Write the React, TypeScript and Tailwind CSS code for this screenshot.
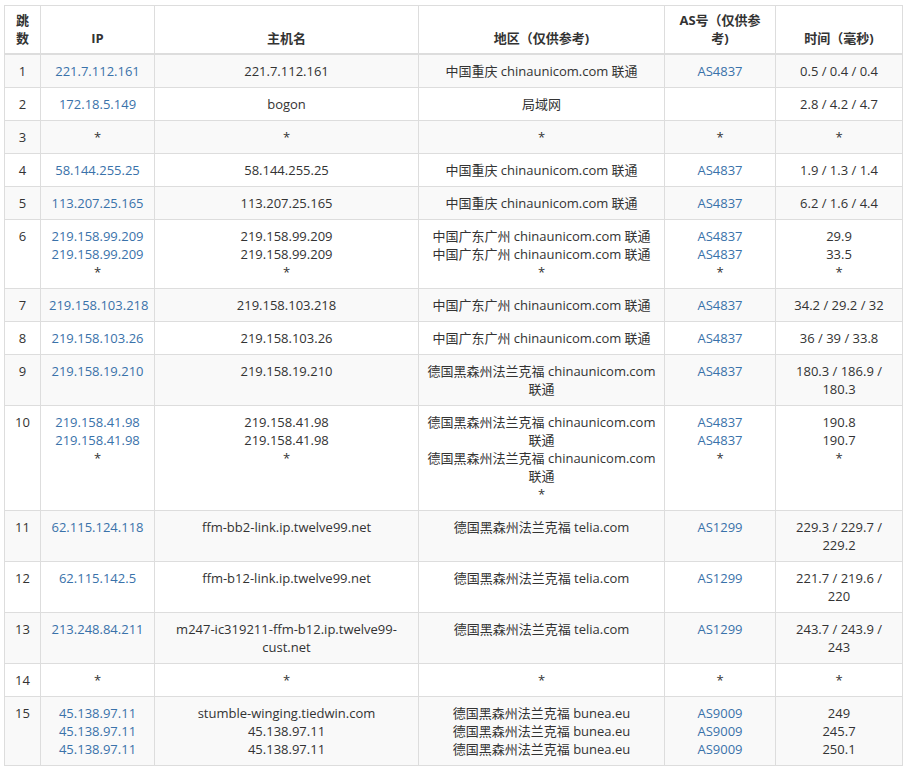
import React from 'react';

type Row = { hop: string; ip: string[]; host: string[]; geo: string[]; as: string[]; time: string[] };

const cu = 'chinaunicom.com 联通';
const rows: Row[] = [
  { hop: '1', ip: ['221.7.112.161'], host: ['221.7.112.161'], geo: ['中国重庆 ' + cu], as: ['AS4837'], time: ['0.5 / 0.4 / 0.4'] },
  { hop: '2', ip: ['172.18.5.149'], host: ['bogon'], geo: ['局域网'], as: [''], time: ['2.8 / 4.2 / 4.7'] },
  { hop: '3', ip: ['*'], host: ['*'], geo: ['*'], as: ['*'], time: ['*'] },
  { hop: '4', ip: ['58.144.255.25'], host: ['58.144.255.25'], geo: ['中国重庆 ' + cu], as: ['AS4837'], time: ['1.9 / 1.3 / 1.4'] },
  { hop: '5', ip: ['113.207.25.165'], host: ['113.207.25.165'], geo: ['中国重庆 ' + cu], as: ['AS4837'], time: ['6.2 / 1.6 / 4.4'] },
  { hop: '6', ip: ['219.158.99.209', '219.158.99.209', '*'], host: ['219.158.99.209', '219.158.99.209', '*'], geo: ['中国广东广州 ' + cu, '中国广东广州 ' + cu, '*'], as: ['AS4837', 'AS4837', '*'], time: ['29.9', '33.5', '*'] },
  { hop: '7', ip: ['219.158.103.218'], host: ['219.158.103.218'], geo: ['中国广东广州 ' + cu], as: ['AS4837'], time: ['34.2 / 29.2 / 32'] },
  { hop: '8', ip: ['219.158.103.26'], host: ['219.158.103.26'], geo: ['中国广东广州 ' + cu], as: ['AS4837'], time: ['36 / 39 / 33.8'] },
  { hop: '9', ip: ['219.158.19.210'], host: ['219.158.19.210'], geo: ['德国黑森州法兰克福 ' + cu], as: ['AS4837'], time: ['180.3 / 186.9 / 180.3'] },
  { hop: '10', ip: ['219.158.41.98', '219.158.41.98', '*'], host: ['219.158.41.98', '219.158.41.98', '*'], geo: ['德国黑森州法兰克福 ' + cu, '德国黑森州法兰克福 ' + cu, '*'], as: ['AS4837', 'AS4837', '*'], time: ['190.8', '190.7', '*'] },
  { hop: '11', ip: ['62.115.124.118'], host: ['ffm-bb2-link.ip.twelve99.net'], geo: ['德国黑森州法兰克福 telia.com'], as: ['AS1299'], time: ['229.3 / 229.7 / 229.2'] },
  { hop: '12', ip: ['62.115.142.5'], host: ['ffm-b12-link.ip.twelve99.net'], geo: ['德国黑森州法兰克福 telia.com'], as: ['AS1299'], time: ['221.7 / 219.6 / 220'] },
  { hop: '13', ip: ['213.248.84.211'], host: ['m247-ic319211-ffm-b12.ip.twelve99-cust.net'], geo: ['德国黑森州法兰克福 telia.com'], as: ['AS1299'], time: ['243.7 / 243.9 / 243'] },
  { hop: '14', ip: ['*'], host: ['*'], geo: ['*'], as: ['*'], time: ['*'] },
  { hop: '15', ip: ['45.138.97.11', '45.138.97.11', '45.138.97.11'], host: ['stumble-winging.tiedwin.com', '45.138.97.11', '45.138.97.11'], geo: ['德国黑森州法兰克福 bunea.eu', '德国黑森州法兰克福 bunea.eu', '德国黑森州法兰克福 bunea.eu'], as: ['AS9009', 'AS9009', 'AS9009'], time: ['249', '245.7', '250.1'] },
];

const td = 'border border-[#ddd] px-2 pt-[7px] pb-[7px] align-top text-center';
const th = 'border border-[#ddd] border-b-2 px-2 pt-[5px] pb-[6px] align-bottom text-center font-bold';

const Lines = ({ items, link }: { items: string[]; link?: boolean }) => (
  <>
    {items.map((t, i) => (
      <div key={i} className={link && t !== '*' ? 'text-[#3a72aa]' : ''}>{t}</div>
    ))}
  </>
);

export default function App() {
  return (
    <div className="bg-white px-[4px] pt-[5px] text-[13px] leading-[18px] text-[#333]" style={{ fontFamily: '"Open Sans", "Noto Sans CJK SC", sans-serif' }}>
      <table className="w-[898px] table-fixed border-collapse">
        <colgroup>
          <col className="w-[36px]" />
          <col className="w-[114px]" />
          <col className="w-[264px]" />
          <col className="w-[246px]" />
          <col className="w-[111px]" />
          <col className="w-[127px]" />
        </colgroup>
        <thead>
          <tr>
            <th className={th}>跳数</th>
            <th className={th}>IP</th>
            <th className={th}>主机名</th>
            <th className={th}>地区（仅供参考)</th>
            <th className={th}>AS号（仅供参考)</th>
            <th className={th}>时间（毫秒)</th>
          </tr>
        </thead>
        <tbody>
          {rows.map((r, i) => (
            <tr key={r.hop} className={i % 2 === 0 ? 'bg-[#f9f9f9]' : 'bg-white'}>
              <td className={td}>{r.hop}</td>
              <td className={td}><Lines items={r.ip} link /></td>
              <td className={td}><Lines items={r.host} /></td>
              <td className={td}><Lines items={r.geo} /></td>
              <td className={td}><Lines items={r.as} link /></td>
              <td className={td}><Lines items={r.time} /></td>
            </tr>
          ))}
        </tbody>
      </table>
    </div>
  );
}
